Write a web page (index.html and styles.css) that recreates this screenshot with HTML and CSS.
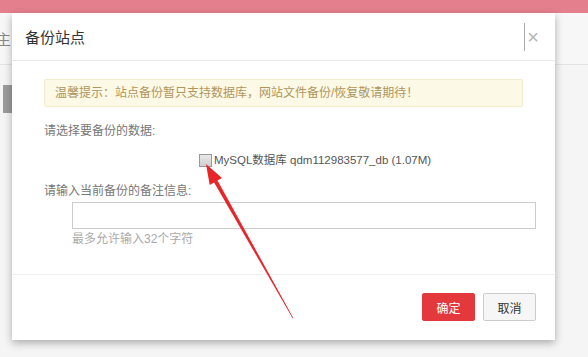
FILE: index.html
```html
<!DOCTYPE html>
<html>
<head>
    <title>备份站点</title>
    <link rel="stylesheet" href="styles.css">
</head>
<body>
    <div class="topbar"></div>
    <div class="page">
        <div class="page-head"><span class="page-title">主</span></div>
        <div class="page-side"></div>
    </div>

    <div class="dialog">
        <div class="dlg-head">
            <h3 class="dlg-title">备份站点</h3>
            <span class="dlg-close">×</span>
        </div>
        <div class="dlg-body">
            <div class="tip">温馨提示：站点备份暂只支持数据库，网站文件备份/恢复敬请期待！</div>
            <p class="label">请选择要备份的数据:</p>
            <label class="db-item"><span class="check"></span>MySQL数据库 qdm112983577_db (1.07M)</label>
            <p class="label label-note">请输入当前备份的备注信息:</p>
            <input class="note-input" type="text">
            <p class="hint">最多允许输入32个字符</p>
        </div>
        <div class="dlg-foot">
            <button class="btn btn-primary">确定</button>
            <button class="btn">取消</button>
        </div>
    </div>

    <!-- red annotation arrow drawn over the screenshot -->
    <svg class="arrow" width="588" height="357" viewBox="0 0 588 357">
        <polygon fill="#e8262a" points="206,164 222,178 217.5,180.4 293.3,318 292.6,318.3 214.1,182.4 209.7,185"/>
    </svg>
</body>
</html>
```

FILE: styles.css
```css
body {
    margin: 0;
    width: 588px;
    height: 357px;
    overflow: hidden;
    background-color: #f5f5f5;
    font-family: "Liberation Sans", "Noto Sans CJK SC", sans-serif;
    font-size: 12px;
    color: #555;
    position: relative;
}

.topbar {
    height: 13px;
    background-color: #e47f8d;
}

.page {
    display: flex;
    flex-direction: column;
}

.page-head {
    height: 51px;
    border-bottom: 1px solid #e3e3e3;
    background-color: #f7f7f7;
    display: flex;
    align-items: center;
}

.page-title {
    font-family: "Noto Sans CJK SC", sans-serif;
    font-size: 15px;
    color: #888;
    margin-left: -4px;
}

.page-side {
    width: 10px;
    height: 28px;
    margin: 20px 0 0 3px;
    background-color: #9b9b9b;
}

.dialog {
    position: absolute;
    left: 12px;
    top: 13px;
    width: 543px;
    background-color: #fff;
    box-shadow: 0 3px 8px rgba(0, 0, 0, 0.3);
}

.dlg-head {
    height: 47px;
    border-bottom: 1px solid #e8e8e8;
    display: flex;
    align-items: center;
    justify-content: space-between;
    padding: 0 16px 0 13px;
}

.dlg-title {
    margin: 0;
    font-family: "Noto Sans CJK SC", sans-serif;
    font-size: 15px;
    font-weight: normal;
    color: #333;
}

.dlg-close {
    font-size: 20px;
    line-height: 28px;
    color: #b5b5b5;
    padding-left: 2px;
    border-left: 1px solid #aaa;
}

.dlg-body {
    padding: 18px 32px 27px;
    border-bottom: 1px solid #eee;
}

.tip {
    height: 26px;
    line-height: 26px;
    padding: 0 10px;
    background-color: #fcf9e6;
    border: 1px solid #f3eccd;
    border-radius: 2px;
    color: #b0955c;
}

.label {
    margin: 15px 0 0;
    line-height: 18px;
    color: #777;
}

.db-item {
    display: flex;
    align-items: center;
    margin: 11px 0 0 155px;
    line-height: 18px;
    font-size: 11.5px;
    color: #555;
}

.check {
    width: 11px;
    height: 11px;
    border: 1px solid #999;
    background: linear-gradient(#e8e8e8, #d0d0d0);
    margin-right: 2px;
}

.label-note {
    margin-top: 13px;
}

.note-input {
    display: block;
    box-sizing: border-box;
    width: 464px;
    height: 27px;
    margin: 2px 0 0 28px;
    border: 1px solid #ccc;
    outline: none;
}

.hint {
    margin: 2px 0 0 28px;
    line-height: 16px;
    color: #aaa;
}

.dlg-foot {
    display: flex;
    justify-content: flex-end;
    gap: 8px;
    padding: 18px 19px 19px;
}

.btn {
    width: 53px;
    height: 28px;
    border: 1px solid #ccc;
    border-radius: 2px;
    background-color: #f6f6f6;
    color: #333;
    font-family: "Noto Sans CJK SC", sans-serif;
    font-size: 12px;
    padding: 0;
}

.btn-primary {
    background-color: #e4393c;
    border-color: #e4393c;
    color: #fff;
}

.arrow {
    position: absolute;
    left: 0;
    top: 0;
}
```
